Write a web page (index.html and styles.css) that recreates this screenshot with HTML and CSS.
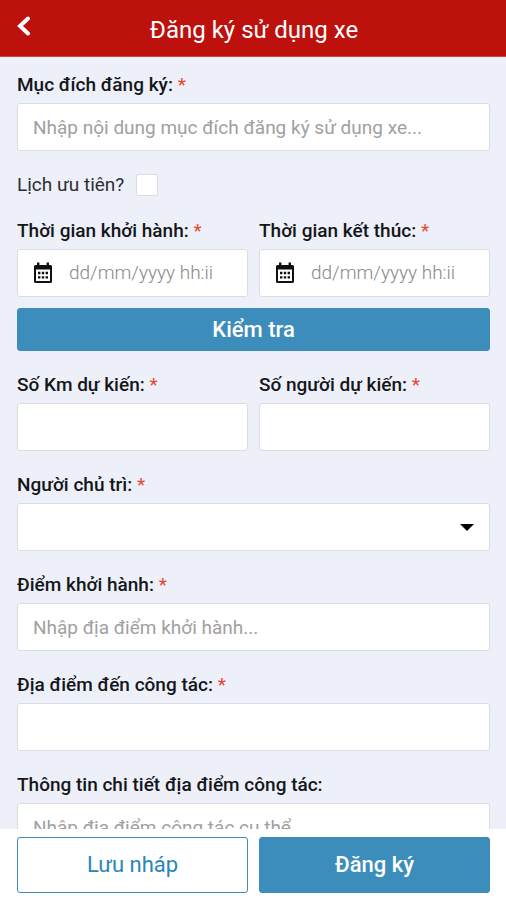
FILE: index.html
```html
<!DOCTYPE html>
<html lang="vi">
<head>
<meta charset="utf-8">
<meta name="viewport" content="width=device-width, initial-scale=1">
<title>Đăng ký sử dụng xe</title>
<link rel="stylesheet" href="styles.css">
</head>
<body>
<svg class="sprite" width="0" height="0" aria-hidden="true">
  <symbol id="calendar" viewBox="0 0 20 22">
    <path fill-rule="evenodd" d="M4 0.500h2.400V3h7.200V0.500H16V3h1.500Q19 3 19 4.500v15Q19 21 17.500 21h-15Q1 21 1 19.500v-15Q1 3 2.500 3H4zM3 7.500V19h14V7.500z"/>
    <path d="M5 9.800h2.400v2.400H5zM8.800 9.800h2.400v2.400H8.800zM12.600 9.800H15v2.400h-2.400zM5 14.200h2.400v2.400H5zM8.800 14.200h2.400v2.400H8.800zM12.600 14.200H15v2.400h-2.400z"/>
  </symbol>
</svg>
<div class="app">
  <header class="topbar">
    <button class="back" type="button" aria-label="Quay lại">
      <svg width="14" height="20" viewBox="0 0 14 20"><path d="M11 2.500 3 10l8 7.500" fill="none" stroke="currentColor" stroke-width="4" stroke-linecap="round" stroke-linejoin="miter"/></svg>
    </button>
    <h1 class="title">Đăng ký sử dụng xe</h1>
  </header>
  <form class="form" id="booking">
    <div class="field">
      <label class="label" for="purpose">Mục đích đăng ký: <span class="required">*</span></label>
      <input class="control" id="purpose" type="text" placeholder="Nhập nội dung mục đích đăng ký sử dụng xe...">
    </div>
    <div class="check-row">
      <label for="priority">Lịch ưu tiên?</label>
      <input class="check" id="priority" type="checkbox">
    </div>
    <div class="schedule">
      <div class="pair">
        <div class="field">
          <label class="label" for="start">Thời gian khởi hành: <span class="required">*</span></label>
          <div class="control date">
            <svg class="icon" aria-hidden="true"><use href="#calendar"/></svg>
            <input class="date-input" id="start" type="text" placeholder="dd/mm/yyyy hh:ii">
          </div>
        </div>
        <div class="field">
          <label class="label" for="end">Thời gian kết thúc: <span class="required">*</span></label>
          <div class="control date">
            <svg class="icon" aria-hidden="true"><use href="#calendar"/></svg>
            <input class="date-input" id="end" type="text" placeholder="dd/mm/yyyy hh:ii">
          </div>
        </div>
      </div>
      <button class="button primary verify" type="button">Kiểm tra</button>
    </div>
    <div class="pair">
      <div class="field">
        <label class="label" for="distance">Số Km dự kiến: <span class="required">*</span></label>
        <input class="control" id="distance" type="text">
      </div>
      <div class="field">
        <label class="label" for="people">Số người dự kiến: <span class="required">*</span></label>
        <input class="control" id="people" type="text">
      </div>
    </div>
    <div class="field">
      <label class="label" for="host">Người chủ trì: <span class="required">*</span></label>
      <div class="select-wrap">
        <select class="control" id="host"><option></option></select>
      </div>
    </div>
    <div class="field">
      <label class="label" for="origin">Điểm khởi hành: <span class="required">*</span></label>
      <input class="control" id="origin" type="text" placeholder="Nhập địa điểm khởi hành...">
    </div>
    <div class="field">
      <label class="label" for="destination">Địa điểm đến công tác: <span class="required">*</span></label>
      <input class="control" id="destination" type="text">
    </div>
    <div class="field">
      <label class="label" for="details">Thông tin chi tiết địa điểm công tác:</label>
      <input class="control" id="details" type="text" placeholder="Nhập địa điểm công tác cụ thể">
    </div>
  </form>
  <footer class="actions">
    <button class="button outline" type="button">Lưu nháp</button>
    <button class="button primary" type="submit" form="booking">Đăng ký</button>
  </footer>
</div>
</body>
</html>
```

FILE: styles.css
```css
* {
  box-sizing: border-box;
}

body {
  margin: 0;
  font-family: Roboto, "Noto Sans", sans-serif;
  font-size: 19px;
  line-height: 24px;
  color: #14161a;
  background: #edf0f8;
}

button,
input,
select {
  font: inherit;
  color: inherit;
}

.sprite {
  position: absolute;
}

.app {
  display: flex;
  flex-direction: column;
  height: 100vh;
}

.topbar {
  display: grid;
  grid-template-columns: 48px 1fr 46px;
  flex: none;
  height: 57px;
  background: #bc110d;
  border-bottom: 1px solid #c9464a;
  color: #fff;
}

.back {
  display: flex;
  padding: 16px 17px;
  border: 0;
  background: none;
  color: #fff;
}

.back svg {
  flex: none;
}

.title {
  margin: 0;
  padding-top: 4px;
  font-size: 24px;
  font-weight: 400;
  line-height: 52px;
  text-align: center;
  white-space: nowrap;
}

.form {
  display: flex;
  flex: 1;
  flex-direction: column;
  gap: 22px;
  min-height: 0;
  padding: 16px 16px 16px 17px;
  overflow-y: auto;
  scrollbar-width: none;
}

.form > * {
  flex: none;
}

.field {
  display: flex;
  flex-direction: column;
  gap: 6px;
  min-width: 0;
}

.label {
  font-weight: 500;
  white-space: nowrap;
}

.required {
  font-weight: 400;
  color: #e8452f;
}

.pair {
  display: grid;
  grid-template-columns: 1fr 1fr;
  gap: 11px;
}

.control {
  width: 100%;
  height: 48px;
  padding: 0 15px;
  border: 1px solid #d9dce2;
  border-radius: 3px;
  background: #fff;
}

.control::placeholder,
.date-input::placeholder {
  color: #a0a0a0;
  opacity: 1;
}

.date-input::placeholder {
  color: #888;
}

.date {
  display: flex;
  align-items: center;
  gap: 16px;
}

.icon {
  flex: none;
  width: 20px;
  height: 22px;
  fill: #101010;
}

.date-input {
  flex: 1;
  min-width: 0;
  padding: 0;
  border: 0;
  background: none;
  font-weight: 300;
}

.check-row {
  display: flex;
  align-items: center;
  gap: 12px;
  color: #2c2e33;
}

.check {
  width: 22px;
  height: 22px;
  margin: 0;
  appearance: none;
  border: 1px solid #d9dce2;
  border-radius: 2px;
  background: #fff;
}

.check:checked {
  background: #3c8dbc;
}

.schedule {
  display: flex;
  flex-direction: column;
  gap: 11px;
}

.select-wrap {
  position: relative;
}

.select-wrap select {
  display: block;
  appearance: none;
}

.select-wrap::after {
  content: "";
  position: absolute;
  top: 21px;
  right: 16px;
  border: solid transparent;
  border-width: 7px 7px 0;
  border-top-color: #000;
  pointer-events: none;
}

.button {
  border: 1px solid #3c8dbc;
  border-radius: 3px;
  font-size: 22px;
  font-weight: 500;
}

.primary {
  background: #3c8dbc;
  color: #fff;
}

.outline {
  background: #fff;
  color: #2a86b8;
  font-weight: 400;
}

.verify {
  height: 43px;
}

.actions {
  display: grid;
  grid-template-columns: 1fr 1fr;
  flex: none;
  gap: 11px;
  padding: 8px 16px 7px 17px;
  background: #fff;
}

.actions .button {
  height: 56px;
}
```
